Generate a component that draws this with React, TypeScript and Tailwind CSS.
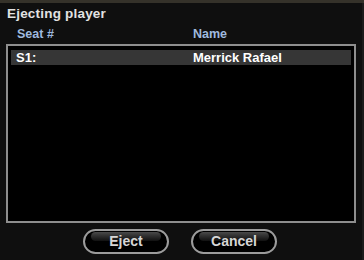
const font = "font-['Liberation_Sans',Arial,sans-serif]";

interface SeatRow {
  seat: string;
  name: string;
}

const rows: SeatRow[] = [{ seat: 'S1:', name: 'Merrick Rafael' }];

const GlossButton: React.FC<{ label: string }> = ({ label }) => (
  <button
    className={`relative flex h-[25px] w-[86px] items-center justify-center overflow-hidden rounded-full border-2 border-[#9c9c9c] bg-black ${font} text-[14px] font-bold text-[#d6d6d6]`}
  >
    <span className="absolute inset-x-[6px] top-[1px] h-[9px] rounded-full bg-gradient-to-b from-[#4a4a4a] to-[#111]" />
    <span className="relative">{label}</span>
  </button>
);

export default function App() {
  return (
    <div className={`flex h-[260px] w-[364px] flex-col bg-[#0f0f0f] ${font}`}>
      <div className="h-[3px] w-full bg-[#35322a]" />
      <div className="flex flex-1">
        <div className="flex flex-1 flex-col px-[6px]">
          <div className="mt-[2px] h-[17px] pl-[1px] text-[13.5px] font-bold leading-[17px] tracking-[0.2px] text-[#e2e2e2]">
            Ejecting player
          </div>
          <div className="mt-[4px] flex h-[16px] text-[12.5px] font-bold leading-[16px] text-[#9fb9df]">
            <span className="w-[187px] pl-[11px]">Seat #</span>
            <span>Name</span>
          </div>
          <div className="mt-[2px] h-[179px] w-[350px] border-2 border-[#8e8e8e] bg-black px-[3px] pt-[4px]">
            {rows.map((r) => (
              <div
                key={r.seat}
                className="flex h-[15px] items-center bg-[#363636] text-[13px] font-bold text-white"
              >
                <span className="w-[182px] pl-[5px]">{r.seat}</span>
                <span>{r.name}</span>
              </div>
            ))}
          </div>
          <div className="mt-[6px] flex gap-[22px] pl-[77px]">
            <GlossButton label="Eject" />
            <GlossButton label="Cancel" />
          </div>
        </div>
        <div className="w-[4px] bg-[#1b1b1b]" />
      </div>
    </div>
  );
}
